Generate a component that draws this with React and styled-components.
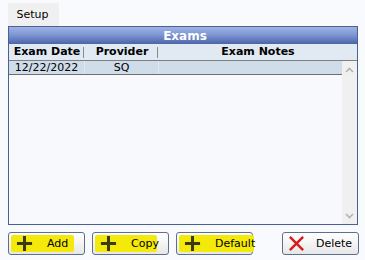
import React from "react";
import styled, { createGlobalStyle } from "styled-components";

const GlobalStyle = createGlobalStyle`
  html, body {
    margin: 0;
    padding: 0;
    background: #f9fafd;
    font-family: "DejaVu Sans", "Liberation Sans", sans-serif;
  }
`;

const exams = [{ date: "12/22/2022", provider: "SQ", notes: "" }];

const App = () => {
  return (
    <Page>
      <GlobalStyle />
      <TabStrip>
        <Tab>Setup</Tab>
      </TabStrip>
      <Panel>
        <TitleBar>Exams</TitleBar>
        <HeaderRow>
          <HeadCell $w={76} $sep>Exam Date</HeadCell>
          <HeadCell $w={74} $sep>Provider</HeadCell>
          <HeadCell $grow>Exam Notes</HeadCell>
        </HeaderRow>
        <Body>
          <Rows>
            {exams.map((ex) => (
              <DataRow key={ex.date}>
                <Cell $w={76}>{ex.date}</Cell>
                <Cell $w={74}>{ex.provider}</Cell>
                <Cell $grow>{ex.notes}</Cell>
              </DataRow>
            ))}
          </Rows>
          <ScrollBar>
            <Chevron viewBox="0 0 9 6">
              <path d="M1 5 L4.5 1.5 L8 5" />
            </Chevron>
            <Chevron viewBox="0 0 9 6">
              <path d="M1 1 L4.5 4.5 L8 1" />
            </Chevron>
          </ScrollBar>
        </Body>
      </Panel>
      <ButtonRow>
        <Button $mark={{ l: 2, r: 10 }}>
          <PlusIcon />
          <span>Add</span>
        </Button>
        <Button $mark={{ l: 2, r: 11 }}>
          <PlusIcon />
          <span>Copy</span>
        </Button>
        <Button $mark={{ l: 2, r: -2 }}>
          <PlusIcon />
          <span>Default</span>
        </Button>
        <Spacer />
        <Button>
          <CrossIcon />
          <span>Delete</span>
        </Button>
      </ButtonRow>
    </Page>
  );
};

const PlusIcon = () => (
  <Icon viewBox="0 0 18 18">
    <path d="M9 1 V17 M1 9 H17" stroke="#3b3b10" strokeWidth="3.2" fill="none" />
  </Icon>
);

const CrossIcon = () => (
  <Icon viewBox="0 0 18 18">
    <path d="M2 2 L16 16 M16 2 L2 16" stroke="#d41c1c" strokeWidth="2.6" fill="none" />
  </Icon>
);

export default App;

const Page = styled.div`
  width: 365px;
  height: 260px;
  padding: 3px 0 0 8px;
  box-sizing: border-box;
`;

const TabStrip = styled.div`
  display: flex;
`;

const Tab = styled.div`
  width: 51px;
  height: 23px;
  background: #f0f0f0;
  font-size: 11px;
  color: #000;
  display: flex;
  align-items: center;
  justify-content: center;
  padding-right: 2px;
  box-sizing: border-box;
`;

const Panel = styled.div`
  width: 350px;
  height: 199px;
  border: 1px solid #4a6194;
  box-sizing: border-box;
  display: flex;
  flex-direction: column;
  background: #f8f9fd;
`;

const TitleBar = styled.div`
  height: 17px;
  background: linear-gradient(#9fb2e3, #7f97d4 45%, #4b64a8);
  color: #fff;
  font-weight: bold;
  font-size: 12px;
  display: flex;
  align-items: center;
  justify-content: center;
  padding-left: 4px;
`;

const HeaderRow = styled.div`
  display: flex;
  height: 16px;
  background: #e1e9f3;
  border-bottom: 1px solid #7f7f7f;
`;

const HeadCell = styled.div`
  width: ${(p) => (p.$w ? `${p.$w}px` : "auto")};
  flex: ${(p) => (p.$grow ? "1" : "none")};
  font-size: 11px;
  font-weight: bold;
  color: #000;
  text-align: center;
  line-height: 16px;
  position: relative;
  &::after {
    content: "";
    display: ${(p) => (p.$sep ? "block" : "none")};
    position: absolute;
    right: 1px;
    top: 3px;
    height: 11px;
    width: 1px;
    background: #8a8a8a;
  }
`;

const Body = styled.div`
  flex: 1;
  display: flex;
  min-height: 0;
`;

const Rows = styled.div`
  flex: 1;
`;

const DataRow = styled.div`
  display: flex;
  height: 13px;
  background: #cfdcea;
  border-bottom: 1px solid #6e6e6e;
`;

const Cell = styled.div`
  width: ${(p) => (p.$w ? `${p.$w}px` : "auto")};
  flex: ${(p) => (p.$grow ? "1" : "none")};
  font-size: 11px;
  color: #000;
  text-align: center;
  line-height: 13px;
  border-right: ${(p) => (p.$grow ? "none" : "1px solid #dfe6ee")};
  box-sizing: border-box;
`;

const ScrollBar = styled.div`
  width: 15px;
  background: #f0f0f0;
  display: flex;
  flex-direction: column;
  justify-content: space-between;
  align-items: center;
  padding: 6px 0 5px;
`;

const Chevron = styled.svg`
  width: 9px;
  height: 6px;
  fill: none;
  stroke: #b4b4b4;
  stroke-width: 1.6;
`;

const ButtonRow = styled.div`
  display: flex;
  gap: 7px;
  margin-top: 7px;
  width: 351px;
`;

const Spacer = styled.div`
  flex: 1;
`;

const Button = styled.button`
  width: 77px;
  height: 23px;
  border: 1px solid #5d6f8c;
  border-radius: 3px;
  background: linear-gradient(#ffffff, #f4f4f4 50%, #e6e6e6);
  position: relative;
  display: flex;
  align-items: center;
  gap: ${(p) => (p.$mark ? "14px" : "11px")};
  padding: 0 0 0 ${(p) => (p.$mark ? "7px" : "5px")};
  font-family: "DejaVu Sans", "Liberation Sans", sans-serif;
  font-size: 11px;
  color: #000;
  box-sizing: border-box;
  &::before {
    content: "";
    display: ${(p) => (p.$mark ? "block" : "none")};
    position: absolute;
    left: ${(p) => (p.$mark ? p.$mark.l : 0)}px;
    right: ${(p) => (p.$mark ? p.$mark.r : 0)}px;
    top: 2px;
    bottom: 2px;
    background: #f3e90a;
    border-radius: 2px;
  }
  & > * {
    position: relative;
  }
`;

const Icon = styled.svg`
  width: 17px;
  height: 17px;
  flex: none;
`;
